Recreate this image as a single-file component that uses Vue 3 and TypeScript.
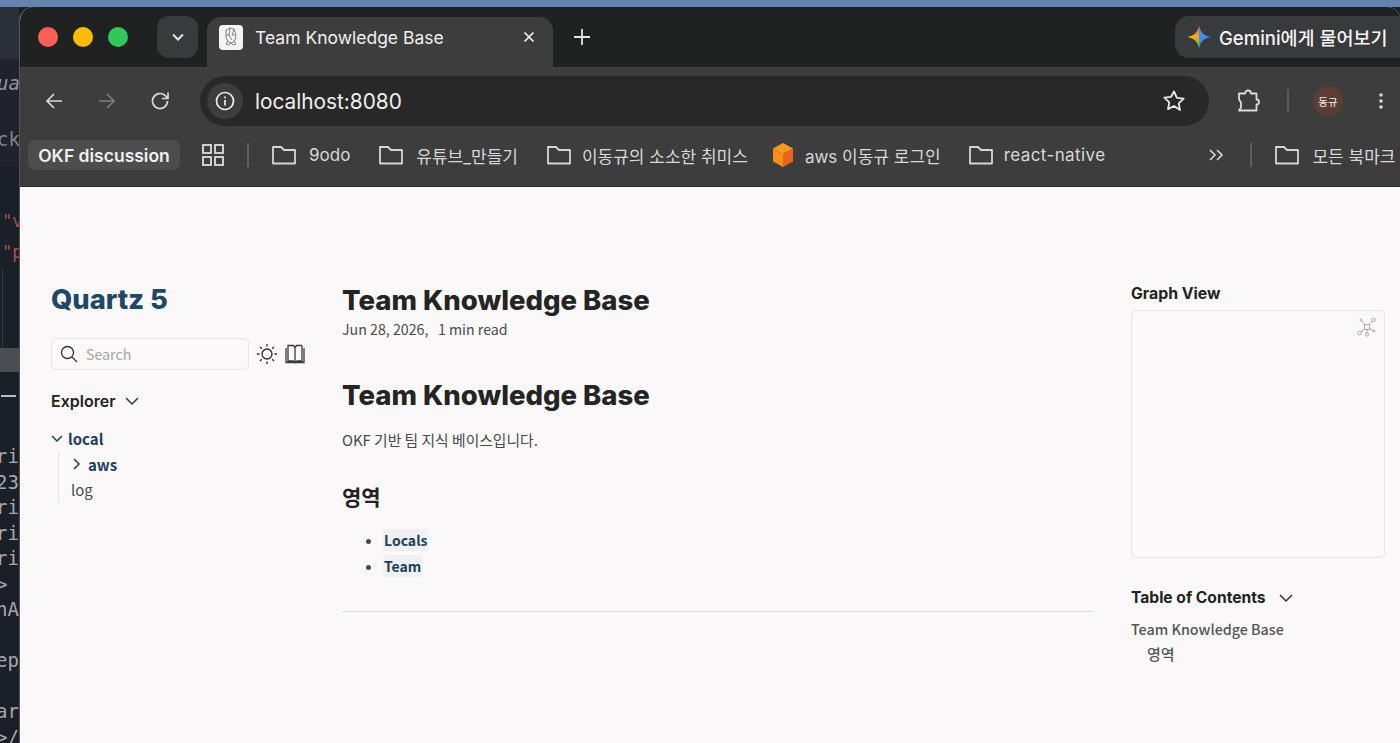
<script setup lang="ts">
// 书签栏数据
const bookmarks = ['9odo', '유튜브_만들기', '이동규의 소소한 취미스']
const codeLines = ['ri', '23', 'ri', 'ri', 'ri', '> ', 'nA', '', 'ep', '', 'ar', '>/']
</script>

<template>
  <div class="screen">
    <div class="wallpaper"></div>
    <div class="desk">
      <div class="editor">
        <div class="ed-top">
          <span class="ed-word ua">ua</span>
          <span class="ed-word ck">ck</span>
        </div>
        <div class="ed-red"><span>"v</span><span>"p</span></div>
        <div class="ed-guide"></div>
        <div class="ed-sel"></div>
        <div class="ed-dash"></div>
        <div class="ed-code">
          <div v-for="(c, i) in codeLines" :key="i" class="ed-line">{{ c }}</div>
        </div>
      </div>

      <div class="browser">
        <div class="tabstrip">
          <div class="lights">
            <span class="light red"></span>
            <span class="light yellow"></span>
            <span class="light green"></span>
          </div>
          <button class="tab-search">
            <svg width="14" height="14" viewBox="0 0 14 14" fill="none" stroke="#dfe6f2" stroke-width="2"><path d="M2 4.5l5 5 5-5" /></svg>
          </button>
          <div class="tab">
            <span class="favicon">
              <svg width="20" height="22" viewBox="0 0 20 22" fill="none" stroke="#555" stroke-width=".7">
                <path d="M5 4l4-2 4 1 2 6-1 5-3 3-4-1-2-5z" />
                <path d="M9 2l-1 7 3 5M13 3l-2 6 3 0M5 9l3 0M7 15l-2 3 3 1 2-2 2 2 3-1-2-3" />
              </svg>
            </span>
            <span class="tab-title">Team Knowledge Base</span>
            <svg class="tab-close" width="12" height="12" viewBox="0 0 12 12" stroke="#f2f2f2" stroke-width="1.7"><path d="M1.5 1.5l9 9M10.5 1.5l-9 9" /></svg>
          </div>
          <svg class="new-tab" width="16" height="16" viewBox="0 0 16 16" stroke="#e6e6e6" stroke-width="1.8"><path d="M8 0v16M0 8h16" /></svg>
          <div class="gemini">
            <svg width="24" height="24" viewBox="0 0 24 24">
              <defs>
                <linearGradient id="gemL" x1="0" y1="0" x2="0" y2="1">
                  <stop offset="0" stop-color="#e8453c" />
                  <stop offset=".5" stop-color="#f9b208" />
                  <stop offset="1" stop-color="#34a853" />
                </linearGradient>
                <linearGradient id="gemR" x1="0" y1="0" x2="0" y2="1">
                  <stop offset="0" stop-color="#5b8df0" />
                  <stop offset=".5" stop-color="#3a8bf5" />
                  <stop offset="1" stop-color="#3aa0c8" />
                </linearGradient>
              </defs>
              <path d="M12 0C11.2 6.5 7.5 10.8 0 12 7.5 13.2 11.2 17.5 12 24z" fill="url(#gemL)" />
              <path d="M12 0C12.8 6.5 16.5 10.8 24 12 16.5 13.2 12.8 17.5 12 24z" fill="url(#gemR)" />
            </svg>
            <span>Gemini에게 물어보기</span>
          </div>
        </div>

        <div class="toolbar">
          <svg class="tb-icon" width="20" height="20" viewBox="0 0 20 20" fill="none" stroke="#d8d8d8" stroke-width="1.7"><path d="M18 10H3M10 3l-7 7 7 7" /></svg>
          <svg class="tb-icon" width="20" height="20" viewBox="0 0 20 20" fill="none" stroke="#7c7c7c" stroke-width="1.7"><path d="M2 10h15M10 3l7 7-7 7" /></svg>
          <svg class="tb-icon" width="20" height="20" viewBox="0 0 20 20" fill="none" stroke="#d8d8d8" stroke-width="1.7"><path d="M17.5 10a7.5 7.5 0 1 1-2.2-5.3L18 7.500M18 1.500v6h-6" /></svg>
          <div class="omnibox">
            <span class="info">
              <svg width="20" height="20" viewBox="0 0 20 20" fill="none" stroke="#efefef" stroke-width="1.7"><circle cx="10" cy="10" r="8.5" /><path d="M10 9v5.500M10 5.500v1.700" /></svg>
            </span>
            <span class="url">localhost:8080</span>
            <svg class="star" width="24" height="24" viewBox="0 0 24 24" fill="none" stroke="#e8e8e8" stroke-width="1.8" stroke-linejoin="round"><path d="M12 2.500l2.900 6.300 6.800.8-5 4.700 1.300 6.800L12 17l-6 3.100 1.300-6.800-5-4.700 6.800-.8z" /></svg>
          </div>
          <svg class="ext" width="26" height="26" viewBox="0 0 26 26" fill="none" stroke="#dcdcdc" stroke-width="1.8" stroke-linejoin="round"><path d="M4 5.500h6a3 3 0 0 1 6 0h5.500v6a2.500 2.500 0 0 1 0 5v6H4l2-3v-5l-2-3z" /></svg>
          <span class="tb-sep"></span>
          <span class="avatar">동규</span>
          <svg class="kebab" width="4" height="18" viewBox="0 0 4 18" fill="#d8d8d8"><circle cx="2" cy="3" r="1.8" /><circle cx="2" cy="9" r="1.8" /><circle cx="2" cy="15" r="1.8" /></svg>
        </div>

        <div class="bookmarks">
          <span class="bm-group">OKF discussion</span>
          <svg class="bm-apps" width="22" height="22" viewBox="0 0 22 22" fill="none" stroke="#d6d6d6" stroke-width="1.9"><rect x="1" y="1" width="8" height="8" /><rect x="13" y="1" width="8" height="8" /><rect x="1" y="13" width="8" height="8" /><rect x="13" y="13" width="8" height="8" /></svg>
          <span class="bm-sep"></span>
          <span v-for="(b, i) in bookmarks" :key="b" class="bm" :class="{ tight: i === 2 }">
            <svg width="26" height="22" viewBox="0 0 26 22" fill="none" stroke="#d6d6d6" stroke-width="1.8" stroke-linejoin="round"><path d="M2 3h8l3 3h11v13.500H2z" /></svg>
            <span>{{ b }}</span>
          </span>
          <span class="bm aws">
            <svg width="24" height="26" viewBox="0 0 24 26">
              <path d="M12 1l10 5.500L12 12 2 6.500z" fill="#ff9a1f" />
              <path d="M2 6.500L12 12v13L2 19.500z" fill="#f78e1a" />
              <path d="M22 6.500L12 12v13l10-5.500z" fill="#e8651c" />
            </svg>
            <span>aws 이동규 로그인</span>
          </span>
          <span class="bm rn">
            <svg width="26" height="22" viewBox="0 0 26 22" fill="none" stroke="#d6d6d6" stroke-width="1.8" stroke-linejoin="round"><path d="M2 3h8l3 3h11v13.500H2z" /></svg>
            <span>react-native</span>
          </span>
          <svg class="more" width="16" height="12" viewBox="0 0 16 12" fill="none" stroke="#d8d8d8" stroke-width="1.6"><path d="M2 1l5 5-5 5M9 1l5 5-5 5" /></svg>
          <span class="bm-sep last"></span>
          <span class="bm all">
            <svg width="26" height="22" viewBox="0 0 26 22" fill="none" stroke="#d6d6d6" stroke-width="1.8" stroke-linejoin="round"><path d="M2 3h8l3 3h11v13.500H2z" /></svg>
            <span>모든 북마크</span>
          </span>
        </div>

        <div class="page">
          <aside class="left">
            <h2 class="logo">Quartz 5</h2>
            <div class="search-row">
              <div class="search">
                <svg width="18" height="18" viewBox="0 0 18 18" fill="none" stroke="#333" stroke-width="1.3"><circle cx="7.500" cy="7.500" r="6" /><path d="M12 12l5 5" /></svg>
                <span>Search</span>
              </div>
              <svg class="sun" width="20" height="20" viewBox="0 0 20 20" fill="none" stroke="#2b2b2b" stroke-width="1.3"><circle cx="10" cy="10" r="5" /><path d="M10 0v2.500M10 17.500V20M0 10h2.500M17.500 10H20M3 3l1.800 1.800M15.200 15.200L17 17M3 17l1.800-1.800M15.200 4.800L17 3" /></svg>
              <svg class="book" width="20" height="20" viewBox="0 0 20 20" fill="none" stroke="#3a3a3a" stroke-width="1.3"><path d="M3 1.500h5.500l1.500 2v15L8 17H3zM17 1.500h-5.500l-1.500 2M1 4v14.500h18V4M17 1.500V17h-5l-2 1.500" /></svg>
            </div>
            <div class="explorer-head">
              <span>Explorer</span>
              <svg width="14" height="9" viewBox="0 0 14 9" fill="none" stroke="#333" stroke-width="1.5"><path d="M1 1l6 6 6-6" /></svg>
            </div>
            <ul class="tree">
              <li class="folder">
                <svg width="12" height="8" viewBox="0 0 12 8" fill="none" stroke="#1d4058" stroke-width="1.5"><path d="M1 1l5 5 5-5" /></svg>
                <span>local</span>
              </li>
              <li class="nested">
                <div class="folder sub">
                  <svg width="8" height="12" viewBox="0 0 8 12" fill="none" stroke="#1d4058" stroke-width="1.5"><path d="M1 1l5 5-5 5" /></svg>
                  <span>aws</span>
                </div>
                <div class="file">log</div>
              </li>
            </ul>
          </aside>

          <main class="center">
            <h1 class="title">Team Knowledge Base</h1>
            <p class="meta">Jun 28, 2026,&nbsp;&nbsp; 1 min read</p>
            <h1 class="title second">Team Knowledge Base</h1>
            <p class="intro">OKF 기반 팀 지식 베이스입니다.</p>
            <h2 class="area">영역</h2>
            <ul class="links">
              <li><a>Locals</a></li>
              <li><a>Team</a></li>
            </ul>
            <hr class="rule" />
          </main>

          <aside class="right">
            <h3 class="r-head">Graph View</h3>
            <div class="graph">
              <svg class="graph-icon" width="20" height="20" viewBox="0 0 20 20" fill="none" stroke="#a3a3a3" stroke-width=".9">
                <rect x="7.500" y="7.500" width="5" height="5" />
                <circle cx="16.500" cy="3" r="1.8" />
                <circle cx="2.500" cy="16" r="1.8" />
                <circle cx="10" cy="17.500" r="1.6" />
                <circle cx="4" cy="3" r="1" />
                <circle cx="17" cy="14" r="1" />
                <path d="M12.500 7.500L15.200 4.300M7.500 12.500L3.800 14.800M10 12.500V16M7.500 7.500L4.800 3.800M12.500 11.500L16 13.500" />
              </svg>
            </div>
            <div class="toc-head">
              <span>Table of Contents</span>
              <svg width="14" height="9" viewBox="0 0 14 9" fill="none" stroke="#333" stroke-width="1.5"><path d="M1 1l6 6 6-6" /></svg>
            </div>
            <div class="toc-item">Team Knowledge Base</div>
            <div class="toc-item sub">영역</div>
          </aside>
        </div>
      </div>
    </div>
  </div>
</template>

<style>
html, body {
  margin: 0;
  background: #1b1f27;
  overflow: hidden;
}
</style>

<style scoped>
.screen {
  width: 1400px;
  height: 743px;
  display: flex;
  flex-direction: column;
  overflow: hidden;
  font-family: "Noto Sans CJK KR", "Noto Sans", sans-serif;
}

.wallpaper {
  height: 7px;
  flex: none;
  background: #6583ac;
}

.desk {
  flex: 1;
  display: flex;
  min-height: 0;
  background: #1b1f27;
}

/* 左侧露出的编辑器窗口 */
.editor {
  width: 19px;
  flex: none;
  font-family: "DejaVu Sans Mono", monospace;
  font-size: 19px;
  color: #a4a8ae;
  overflow: hidden;
  white-space: pre;
}

.ed-top {
  height: 160px;
  box-sizing: border-box;
  padding-top: 63px;
  display: flex;
  flex-direction: column;
  align-items: flex-end;
  background: linear-gradient(#2b2f39 0, #2b2f39 52px, #20232c 52px);
}

.ed-word {
  display: block;
  line-height: 26px;
  color: #9095a0;
  margin-right: -1px;
}

.ua {
  font-style: italic;
}

.ck {
  margin-top: 30px;
  color: #7e838c;
}

.ed-red {
  display: flex;
  flex-direction: column;
  gap: 11px;
  margin-top: 44px;
  padding-left: 2px;
  color: #a5524f;
  font-size: 17px;
  line-height: 20px;
}

.ed-guide {
  width: 1px;
  height: 80px;
  margin: 6px 0 0 2px;
  background: #33363d;
}

.ed-sel {
  height: 24px;
  background: #4b4e53;
}

.ed-dash {
  width: 15px;
  height: 2px;
  margin: 23px 0 0 1px;
  background: #b9bcc0;
}

.ed-code {
  margin-top: 47px;
}

.ed-line {
  height: 25.5px;
  line-height: 25.5px;
  display: flex;
  justify-content: flex-end;
}

.browser {
  flex: 1;
  min-width: 0;
  display: flex;
  flex-direction: column;
  background: #faf8f8;
  border-left: 1px solid #52565c;
  border-top-left-radius: 14px;
  border-top-right-radius: 12px;
  overflow: hidden;
  color: #2b2b2b;
}

.tabstrip {
  height: 60px;
  flex: none;
  display: flex;
  align-items: center;
  background: #202221;
  padding-left: 18px;
  box-sizing: border-box;
}

.lights {
  display: flex;
  gap: 15px;
}

.light {
  width: 20px;
  height: 20px;
  border-radius: 50%;
}

.red { background: #fe5f57; }
.yellow { background: #febc0a; }
.green { background: #31c75a; }

.tab-search {
  width: 41px;
  height: 42px;
  margin-left: 29px;
  border: 0;
  border-radius: 12px;
  background: #383a3b;
  display: flex;
  align-items: center;
  justify-content: center;
  padding: 0;
}

.tab {
  width: 346px;
  height: 50px;
  margin: 10px 0 0 9px;
  align-self: flex-start;
  background: #3d3d3d;
  border-radius: 14px 14px 0 0;
  display: flex;
  align-items: center;
  box-sizing: border-box;
  padding: 0 18px 10px 12px;
  color: #f0f0f0;
  flex: none;
}

.favicon {
  width: 24px;
  height: 25px;
  border-radius: 4px;
  background: #f4f4f4;
  display: flex;
  align-items: center;
  justify-content: center;
}

.tab-title {
  margin-left: 12px;
  font-family: "Inter", sans-serif;
  font-size: 17.5px;
  flex: 1;
}

.new-tab {
  margin-left: 21px;
}

.gemini {
  margin-left: auto;
  height: 42px;
  width: 225px;
  flex: none;
  background: #383a3b;
  border-radius: 14px 0 0 14px;
  display: flex;
  align-items: center;
  gap: 8px;
  padding-left: 12px;
  box-sizing: border-box;
  color: #f4f4f4;
  font-family: "Inter", "Noto Sans CJK KR", sans-serif;
  font-size: 18.5px;
  font-weight: 500;
  white-space: nowrap;
}

.toolbar {
  height: 68px;
  flex: none;
  display: flex;
  align-items: center;
  background: #3d3d3d;
  padding-left: 24px;
  box-sizing: border-box;
}

.tb-icon {
  margin-right: 33px;
}

.omnibox {
  width: 1009px;
  height: 50px;
  margin-left: -3px;
  flex: none;
  border-radius: 25px;
  background: #282828;
  display: flex;
  align-items: center;
  padding: 0 23px 0 7px;
  box-sizing: border-box;
}

.info {
  width: 36px;
  height: 36px;
  border-radius: 50%;
  background: #3d3d3d;
  display: flex;
  align-items: center;
  justify-content: center;
}

.url {
  margin-left: 12px;
  font-family: "Inter", sans-serif;
  font-size: 20.8px;
  color: #efefef;
  flex: 1;
}

.ext {
  margin-left: 26px;
}

.tb-sep {
  width: 2px;
  height: 24px;
  margin-left: 26px;
  background: #5a5a5a;
}

.avatar {
  width: 30px;
  height: 30px;
  margin-left: 24px;
  border-radius: 50%;
  background: #5b3d35;
  color: #f0f0f0;
  font-size: 10.5px;
  display: flex;
  align-items: center;
  justify-content: center;
}

.kebab {
  margin-left: 36px;
}

.bookmarks {
  height: 52px;
  flex: none;
  display: flex;
  align-items: center;
  background: #3d3d3d;
  border-bottom: 1px solid #2a2a2a;
  box-sizing: border-box;
  padding: 0 0 11px 8px;
  color: #d8d8d8;
  font-size: 17px;
  white-space: nowrap;
}

.bm-group {
  height: 30px;
  width: 152px;
  flex: none;
  display: flex;
  align-items: center;
  justify-content: center;
  background: #4d4d4d;
  border-radius: 8px;
  color: #f0f0f0;
  font-weight: 600;
  font-family: "Inter", sans-serif;
  font-size: 17.5px;
}

.bm-apps {
  margin-left: 22px;
}

.bm-sep {
  width: 2px;
  height: 24px;
  margin: 0 22px 0 23px;
  background: #5f5f5f;
}

.bm {
  display: flex;
  align-items: center;
  gap: 12px;
  flex: none;
  font-family: "Inter", "Noto Sans CJK KR", sans-serif;
}

.bm + .bm {
  margin-left: 28px;
}

.bm.tight {
  gap: 10px;
}

.bm + .aws {
  margin-left: 23px;
  gap: 10px;
}

.bm + .rn {
  margin-left: 27px;
  gap: 10px;
}

.rn span {
  letter-spacing: .4px;
}

.more {
  margin-left: 103px;
}

.bm-sep.last {
  margin: 0 22px 0 26px;
}

.page {
  flex: 1;
  min-height: 0;
  display: flex;
  background: #faf8f8;
  padding-top: 94px;
  box-sizing: border-box;
}

.left {
  width: 322px;
  flex: none;
  padding-left: 31px;
  box-sizing: border-box;
}

.logo {
  margin: 0;
  font-family: "Inter", sans-serif;
  font-size: 27.3px;
  line-height: 38px;
  font-weight: 800;
  color: #1e4863;
}

.search-row {
  margin-top: 19px;
  display: flex;
  align-items: center;
}

.search {
  width: 198px;
  height: 32px;
  box-sizing: border-box;
  border: 1px solid #e5e3e3;
  border-radius: 5px;
  display: flex;
  align-items: center;
  gap: 8px;
  padding: 0 0 1px 8px;
  font-size: 14.2px;
  color: #a6a6a6;
}

.sun {
  margin-left: 8px;
}

.book {
  margin-left: 8px;
}

.explorer-head {
  margin-top: 20px;
  display: flex;
  align-items: center;
  gap: 9px;
  font-family: "Inter", sans-serif;
  font-weight: 600;
  font-size: 16px;
  line-height: 22px;
  color: #222;
}

.tree {
  list-style: none;
  margin: 14px 0 0;
  padding: 0;
  font-size: 15px;
  line-height: 25.5px;
}

.folder {
  display: flex;
  align-items: center;
  gap: 5px;
  font-weight: 700;
  color: #1d4058;
}

.nested {
  margin-left: 7px;
  border-left: 1px solid #e5e3e3;
  padding-left: 12px;
}

.sub {
  padding-left: 2px;
  gap: 7px;
}

.file {
  color: #4a4a4a;
}

.center {
  width: 752px;
  flex: none;
}

.title {
  margin: 0;
  font-family: "Inter", sans-serif;
  font-weight: 800;
  font-size: 27.5px;
  line-height: 38px;
  color: #242424;
}

.meta {
  margin: 0;
  font-size: 14.2px;
  line-height: 20px;
  color: #4a4a4a;
}

.second {
  margin-top: 37px;
}

.intro {
  margin: 16px 0 0;
  font-size: 14.8px;
  line-height: 20px;
  color: #4a4a4a;
}

.area {
  margin: 31px 0 0;
  font-size: 21px;
  line-height: 30px;
  font-weight: 700;
  color: #222;
}

.links {
  margin: 16px 0 0;
  padding-left: 41px;
  font-size: 14px;
  line-height: 26px;
  color: #4a4a4a;
}

.links a {
  font-weight: 600;
  color: #1d4058;
  background: #eef0f1;
  border-radius: 4px;
  padding: 1px 1px;
}

.rule {
  margin: 32px 0 0;
  border: 0;
  border-top: 1px solid #dedcdc;
}

.right {
  margin-left: 37px;
  width: 254px;
  flex: none;
}

.r-head {
  margin: 0;
  padding-top: 1px;
  font-family: "Inter", sans-serif;
  font-weight: 700;
  font-size: 15.8px;
  line-height: 24px;
  color: #222;
}

.graph {
  margin-top: 4px;
  height: 248px;
  box-sizing: border-box;
  border: 1px solid #e5e3e3;
  border-radius: 5px;
  position: relative;
}

.graph-icon {
  position: absolute;
  top: 6px;
  right: 7px;
}

.toc-head {
  margin-top: 28px;
  display: flex;
  align-items: center;
  gap: 13px;
  font-family: "Inter", sans-serif;
  font-weight: 700;
  font-size: 15.6px;
  line-height: 24px;
  color: #222;
}

.toc-item {
  margin-top: 7px;
  font-size: 14.3px;
  line-height: 24.5px;
  font-weight: 500;
  color: #555;
}

.toc-item.sub {
  margin-top: 0;
  padding-left: 16px;
  font-size: 15px;
}
</style>
